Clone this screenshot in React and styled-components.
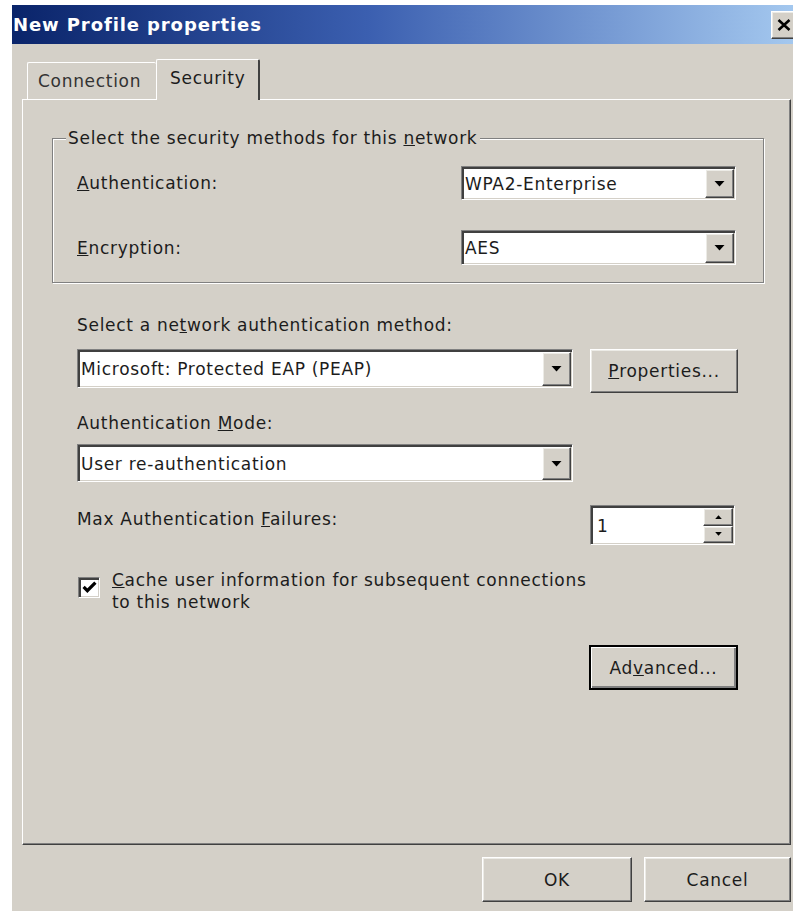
import React from 'react'
import styled, { createGlobalStyle, css } from 'styled-components'

const colours = {
  face: '#d4d0c8',
  light: '#ffffff',
  shadow: '#808080',
  dark: '#404040',
  text: '#1c1c1c',
}

const GlobalStyle = createGlobalStyle`
  html, body {
    margin: 0;
    padding: 0;
    background: #fff;
    overflow: hidden;
  }
  body {
    font-family: "DejaVu Sans", Tahoma, sans-serif;
    font-size: 17px;
    letter-spacing: 0.7px;
    color: ${colours.text};
  }
`

const raised = css`
  border-top: 1px solid ${colours.light};
  border-left: 1px solid ${colours.light};
  border-right: 1px solid ${colours.dark};
  border-bottom: 1px solid ${colours.dark};
  box-shadow: inset -1px -1px 0 ${colours.shadow}, inset 1px 1px 0 #ecebe6;
`

const sunken = css`
  border-top: 1px solid ${colours.shadow};
  border-left: 1px solid ${colours.shadow};
  border-right: 1px solid ${colours.light};
  border-bottom: 1px solid ${colours.light};
  box-shadow: inset 2px 2px 0 ${colours.dark}, inset -1px -1px 0 ${colours.face};
`

const Screen = styled.div`
  box-sizing: border-box;
  height: 911px;
  padding: 5px 0 0 12px;
  overflow: hidden;
`

const Window = styled.div`
  width: 790px;
  height: 906px;
  background: ${colours.face};
  display: flex;
  flex-direction: column;
`

const TitleBar = styled.div`
  height: 39px;
  flex: none;
  display: flex;
  align-items: center;
  padding-left: 1px;
  background: linear-gradient(to right, #0a246a 0%, #3b5fb0 45%, #a6caf0 100%);
  color: #fff;
  font-weight: bold;
  font-size: 18px;
  letter-spacing: 0.9px;
`

const CloseButton = styled.div`
  box-sizing: border-box;
  margin-left: auto;
  margin-right: 5px;
  width: 26px;
  height: 28px;
  background: ${colours.face};
  ${raised};
  display: flex;
  align-items: center;
  justify-content: center;
`

const Body = styled.div`
  flex: 1;
  display: flex;
  flex-direction: column;
  padding: 15px 11px 0 10px;
`

const TabStrip = styled.div`
  display: flex;
  align-items: flex-end;
  padding-left: 5px;
`

const Tab = styled.div`
  box-sizing: border-box;
  position: relative;
  z-index: ${p => (p.$active ? 1 : 0)};
  width: ${p => p.$width}px;
  height: ${p => (p.$active ? 41 : 37)}px;
  margin-bottom: ${p => (p.$active ? -1 : 0)}px;
  padding-left: ${p => (p.$active ? 13 : 10)}px;
  display: flex;
  align-items: center;
  background: ${colours.face};
  border-top: 1px solid ${colours.light};
  border-left: 1px solid ${colours.light};
  border-right: ${p => (p.$active ? `2px solid ${colours.dark}` : 'none')};
  border-radius: 2px 2px 0 0;
  padding-bottom: ${p => (p.$active ? 4 : 0)}px;
  color: ${p => (p.$active ? colours.text : '#333')};
`

const Panel = styled.div`
  box-sizing: border-box;
  height: 746px;
  border-top: 1px solid ${colours.light};
  border-left: 1px solid ${colours.light};
  border-right: 1px solid ${colours.dark};
  border-bottom: 1px solid ${colours.dark};
  box-shadow: inset -1px -1px 0 ${colours.shadow};
  padding: 28px 26px 0 29px;
`

const Group = styled.fieldset`
  margin: 0;
  min-width: 0;
  border: 1px solid ${colours.shadow};
  box-shadow: inset 1px 1px 0 ${colours.light}, 1px 1px 0 ${colours.light};
  padding: 18px 27px 17px 24px;
  display: flex;
  flex-direction: column;
  gap: 30px;
`

const GroupLegend = styled.legend`
  margin-left: -11px;
  padding: 0 3px 0 2px;
  line-height: 20px;
  background: ${colours.face};
`

const FieldRow = styled.div`
  display: flex;
  align-items: center;
  justify-content: space-between;
`

const Label = styled.div`
  line-height: 22px;
  margin-top: ${p => p.$top || 0}px;
  align-self: ${p => (p.$top !== undefined ? 'flex-start' : 'auto')};
  white-space: nowrap;
`

const Section = styled.div`
  width: 661px;
  padding-left: 25px;
  display: flex;
  flex-direction: column;
`

const ControlRow = styled.div`
  display: flex;
  align-items: ${p => p.$align || 'flex-start'};
  justify-content: ${p => p.$justify || 'flex-start'};
  margin-top: ${p => p.$top || 0}px;
`

const Select = styled.div`
  box-sizing: border-box;
  width: ${p => p.$width}px;
  height: ${p => p.$height}px;
  display: flex;
  background: #fff;
  ${sunken};
  padding: 2px 1px 1px 2px;
`

const SelectValue = styled.div`
  flex: 1;
  display: flex;
  align-items: center;
  padding-left: 1px;
  white-space: nowrap;
  overflow: hidden;
`

const ArrowButton = styled.div`
  box-sizing: border-box;
  width: 29px;
  background: ${colours.face};
  ${raised};
  display: flex;
  align-items: center;
  justify-content: center;
`

const Button = styled.div`
  box-sizing: border-box;
  width: ${p => p.$width}px;
  height: ${p => p.$height || 45}px;
  margin-left: ${p => p.$gap || 0}px;
  background: ${colours.face};
  display: flex;
  align-items: center;
  justify-content: center;
  ${p =>
    p.$default
      ? css`
          border: 2px solid #000;
          box-shadow: inset 1px 1px 0 ${colours.light}, inset -2px -2px 0 ${colours.shadow};
        `
      : raised};
`

const Spinner = styled.div`
  box-sizing: border-box;
  width: 145px;
  height: 40px;
  margin-right: 3px;
  display: flex;
  background: #fff;
  ${sunken};
  padding: 2px 1px 1px 2px;
`

const SpinValue = styled.div`
  flex: 1;
  display: flex;
  align-items: center;
  padding-left: 4px;
`

const SpinButtons = styled.div`
  width: 30px;
  display: flex;
  flex-direction: column;
`

const SpinButton = styled.div`
  box-sizing: border-box;
  flex: 1;
  background: ${colours.face};
  ${raised};
  display: flex;
  align-items: center;
  justify-content: center;
`

const CheckRow = styled.div`
  display: flex;
  align-items: flex-start;
  margin-top: 24px;
  margin-left: 1px;
`

const CheckBox = styled.div`
  box-sizing: border-box;
  flex: none;
  width: 22px;
  height: 21px;
  margin-top: 8px;
  margin-right: 12px;
  background: #fff;
  ${sunken};
  display: flex;
  align-items: center;
  justify-content: center;
`

const CheckText = styled.div`
  line-height: 22px;
`

const Footer = styled.div`
  display: flex;
  justify-content: flex-end;
  gap: 12px;
  padding-top: 12px;
`

const DownArrow = ({ w = 11, h = 6 }) => (
  <svg width={w} height={h} viewBox="0 0 10 6">
    <path d="M0 0h10L5 5.5z" fill="#000" />
  </svg>
)

const UpArrow = () => (
  <svg width="7" height="4" viewBox="0 0 10 6">
    <path d="M0 6h10L5 0.5z" fill="#000" />
  </svg>
)

const Dropdown = ({ value, width, height }) => (
  <Select $width={width} $height={height}>
    <SelectValue>{value}</SelectValue>
    <ArrowButton>
      <DownArrow />
    </ArrowButton>
  </Select>
)

const App = () => (
  <Screen>
    <GlobalStyle />
    <Window>
      <TitleBar>
        New Profile properties
        <CloseButton>
          <svg width="14" height="12" viewBox="0 0 14 12">
            <path d="M1.5 1l11 10M12.5 1l-11 10" stroke="#000" strokeWidth="2.6" />
          </svg>
        </CloseButton>
      </TitleBar>
      <Body>
        <TabStrip>
          <Tab $width={129}>Connection</Tab>
          <Tab $width={104} $active>
            Security
          </Tab>
        </TabStrip>
        <Panel>
          <Group>
            <GroupLegend>
              Select the security methods for this <u>n</u>etwork
            </GroupLegend>
            <FieldRow>
              <Label>
                <u>A</u>uthentication:
              </Label>
              <Dropdown value="WPA2-Enterprise" width={275} height={34} />
            </FieldRow>
            <FieldRow>
              <Label>
                <u>E</u>ncryption:
              </Label>
              <Dropdown value="AES" width={275} height={35} />
            </FieldRow>
          </Group>

          <Section>
            <Label $top={31}>
              Select a ne<u>t</u>work authentication method:
            </Label>
            <ControlRow $top={13}>
              <Dropdown value="Microsoft: Protected EAP (PEAP)" width={496} height={39} />
              <Button $width={148} $height={44} $gap={17}>
                <u>P</u>roperties...
              </Button>
            </ControlRow>
            <Label $top={19}>
              Authentication <u>M</u>ode:
            </Label>
            <ControlRow $top={10}>
              <Dropdown value="User re-authentication" width={496} height={38} />
            </ControlRow>
            <ControlRow $top={23} $justify="space-between">
              <Label $top={3}>
                Max Authentication <u>F</u>ailures:
              </Label>
              <Spinner>
                <SpinValue>1</SpinValue>
                <SpinButtons>
                  <SpinButton>
                    <UpArrow />
                  </SpinButton>
                  <SpinButton>
                    <DownArrow w={7} h={4} />
                  </SpinButton>
                </SpinButtons>
              </Spinner>
            </ControlRow>
            <CheckRow>
              <CheckBox>
                <svg width="15" height="13" viewBox="0 0 14 12">
                  <path d="M1.5 5.5l3.5 3.5 7.5-7.5" fill="none" stroke="#000" strokeWidth="3" />
                </svg>
              </CheckBox>
              <CheckText>
                <u>C</u>ache user information for subsequent connections
                <br />
                to this network
              </CheckText>
            </CheckRow>
            <ControlRow $top={32} $justify="flex-end">
              <Button $width={149} $default>
                Ad<u>v</u>anced...
              </Button>
            </ControlRow>
          </Section>
        </Panel>
        <Footer>
          <Button $width={150}>OK</Button>
          <Button $width={147}>Cancel</Button>
        </Footer>
      </Body>
    </Window>
  </Screen>
)

export default App
